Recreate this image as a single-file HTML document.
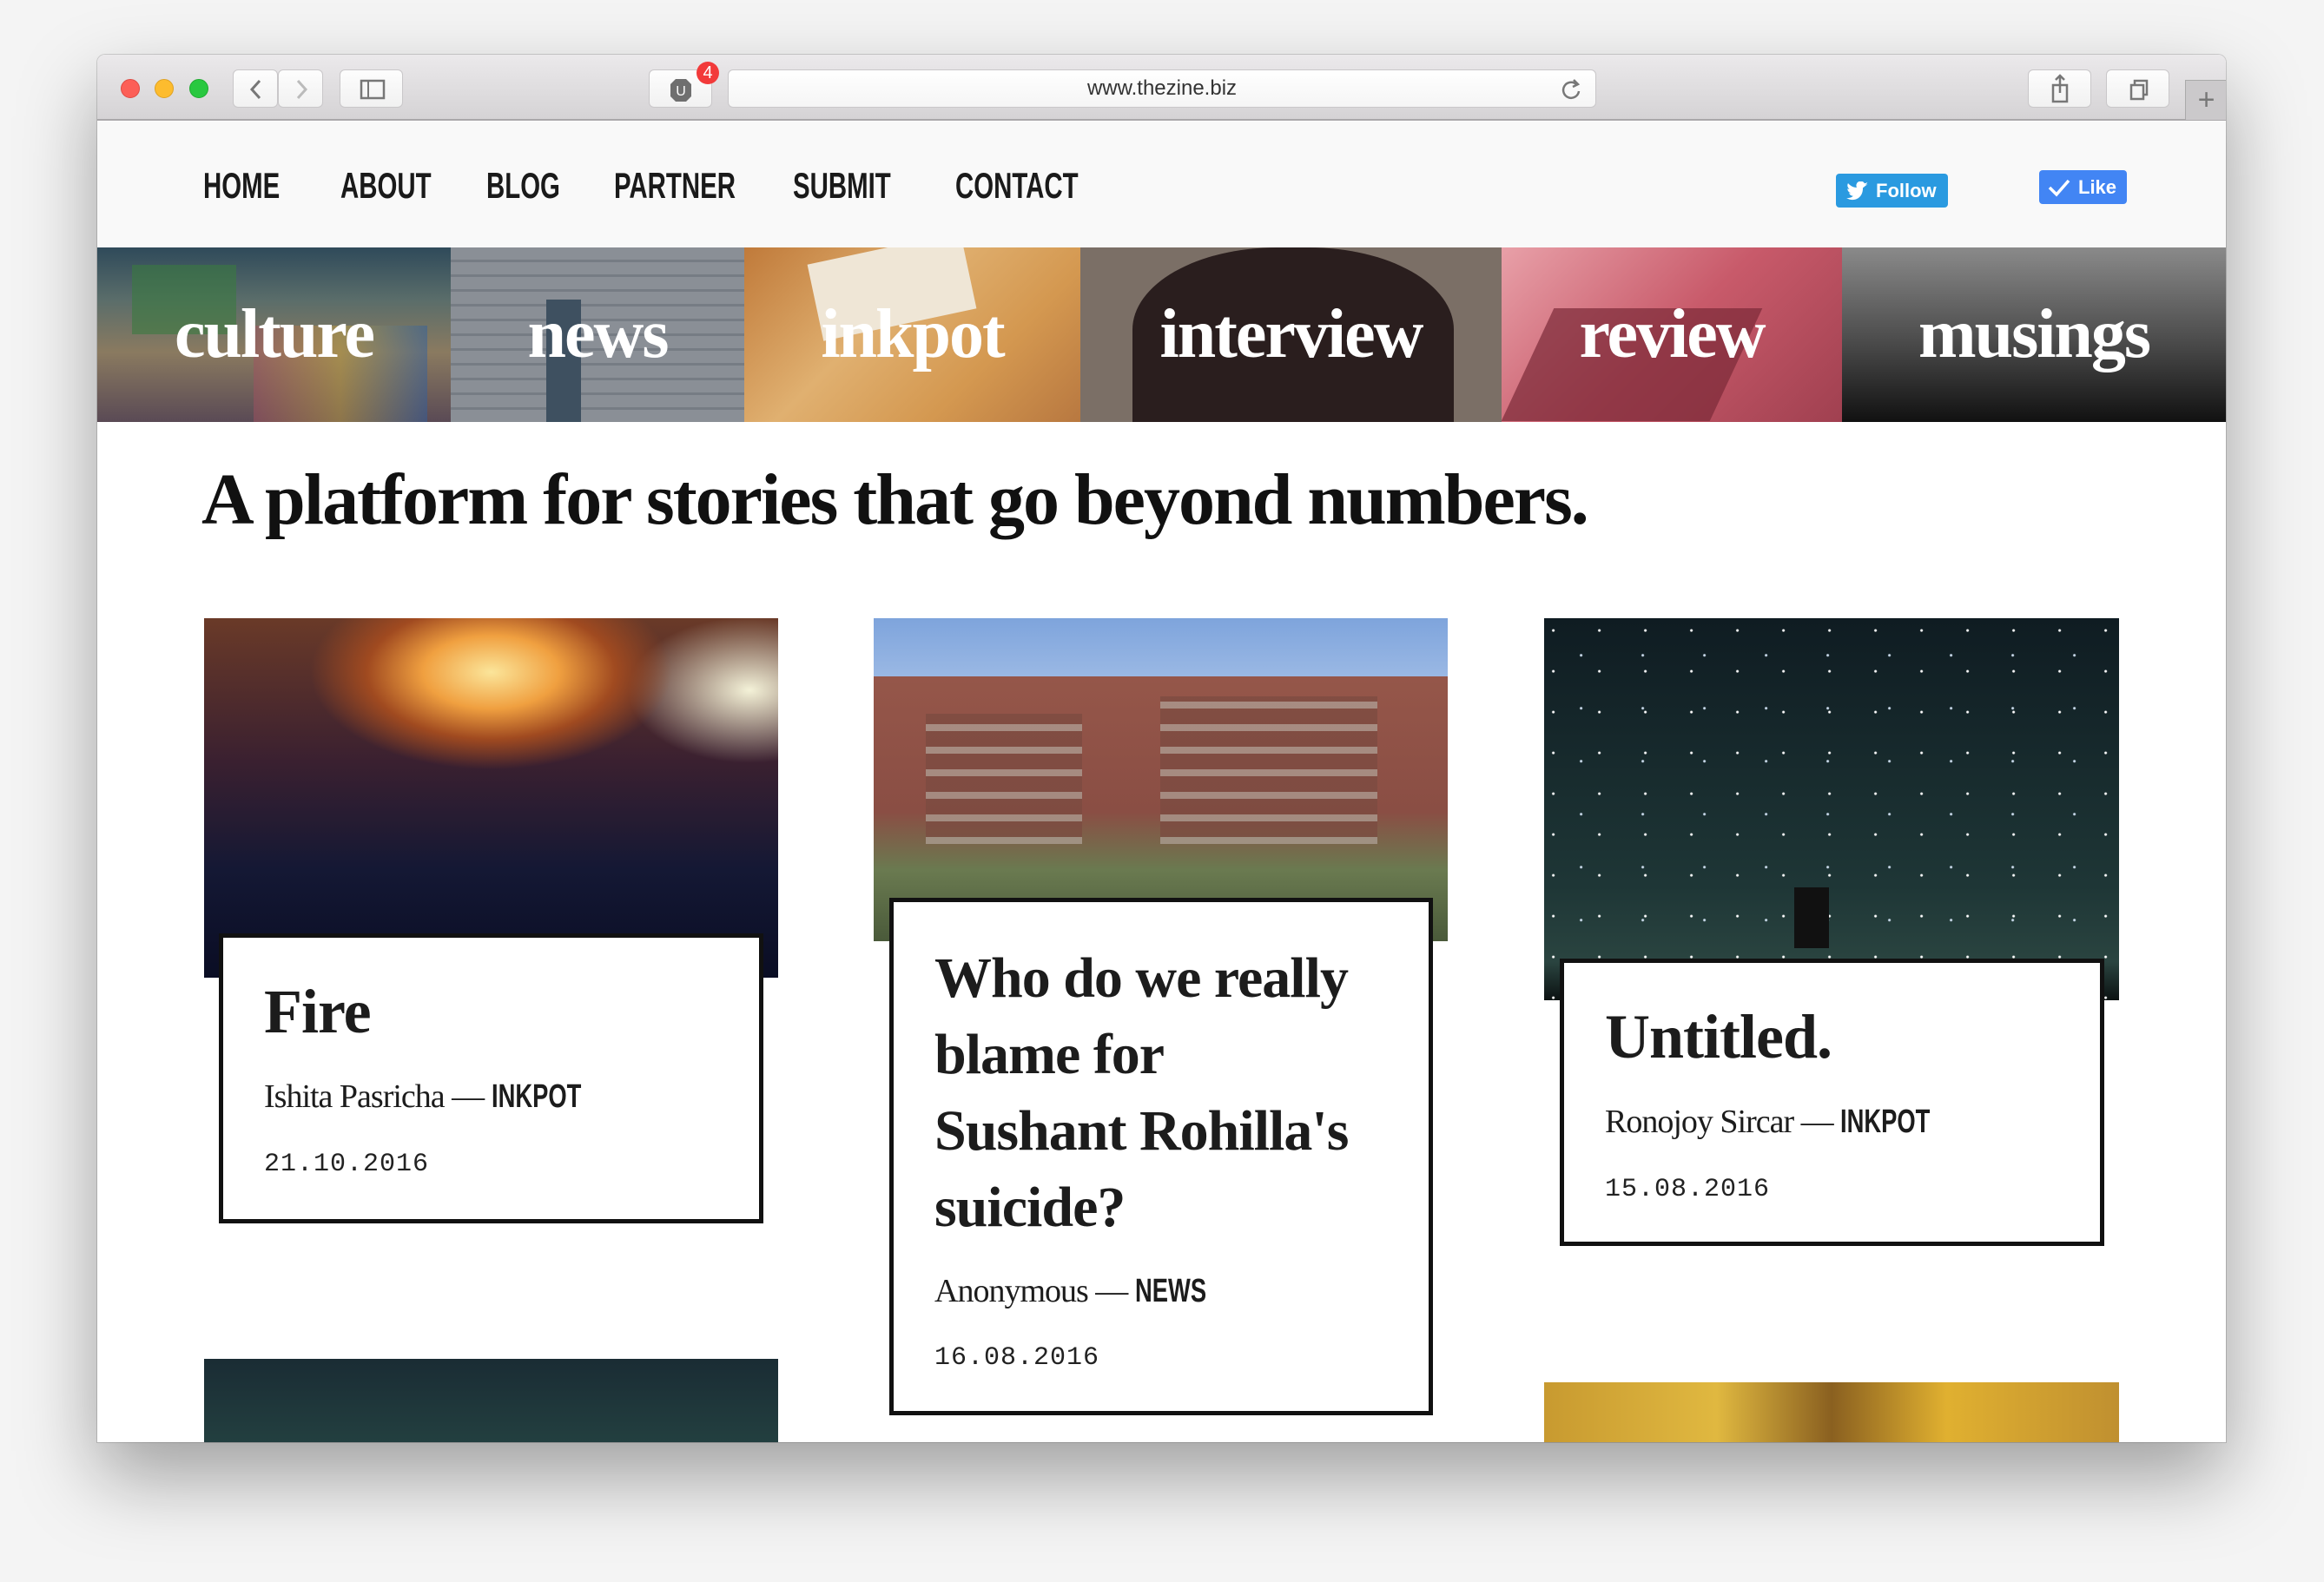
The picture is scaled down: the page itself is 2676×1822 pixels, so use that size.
<!DOCTYPE html>
<html><head><meta charset="utf-8"><style>
*{margin:0;padding:0;box-sizing:border-box}
body{width:2676px;height:1822px;background:#f4f4f4;position:relative;overflow:hidden;font-family:"Liberation Sans",sans-serif}
.win{position:absolute;left:112px;top:63px;width:2451px;height:1598px;background:#fff;border-radius:9px 9px 0 0;overflow:hidden;box-shadow:0 40px 90px rgba(0,0,0,.35),0 0 0 1px rgba(0,0,0,.15)}
.tb{position:absolute;left:0;top:0;width:100%;height:76px;background:linear-gradient(#ebe9eb,#d5d3d5);border-bottom:2px solid #a9a7a9}
.dot{position:absolute;top:28px;width:22px;height:22px;border-radius:50%}
.btn{position:absolute;top:17px;height:44px;background:linear-gradient(#fdfdfd,#f1f1f1);border:1px solid #c9c7c9;border-radius:6px}
.abs{position:absolute}
.nav{position:absolute;top:127px;font-family:"Liberation Sans",sans-serif;font-weight:bold;font-size:42px;color:#1a1a1a;transform:scaleX(.7);transform-origin:0 0;white-space:nowrap}
.cat{position:absolute;top:222px;height:201px;overflow:hidden}
.cat span{position:absolute;left:0;right:0;top:55px;text-align:center;font-family:"Liberation Serif",serif;font-weight:bold;font-size:80px;color:#fff;letter-spacing:-2px}
.serif{font-family:"Liberation Serif",serif}
.box{position:absolute;background:#fff;border:5px solid #111}
.t{font-family:"Liberation Serif",serif;font-weight:bold;color:#1c1c1c;letter-spacing:-1px;white-space:nowrap}
.by{font-family:"Liberation Serif",serif;font-size:38px;color:#1c1c1c;letter-spacing:-1px;white-space:nowrap}
.by b{display:inline-block;font-family:"Liberation Sans",sans-serif;font-size:38px;letter-spacing:0;transform:scaleX(.72);transform-origin:0 0}
.dt{font-family:"Liberation Mono",monospace;font-size:30px;color:#222;letter-spacing:1px}
</style></head><body>
<div class="win">
 <div class="tb">
  <div class="dot" style="left:27px;background:#fc5f57;border:1px solid #de4a43"></div>
  <div class="dot" style="left:66px;background:#fdbc2e;border:1px solid #dea123"></div>
  <div class="dot" style="left:106px;background:#29c840;border:1px solid #1eab2f"></div>
  <div class="btn" style="left:156px;width:52px"><svg width="52" height="44"><path d="M30 12 L21 22 L30 32" stroke="#777" stroke-width="3" fill="none"/></svg></div>
  <div class="btn" style="left:208px;width:52px"><svg width="52" height="44"><path d="M22 12 L31 22 L22 32" stroke="#bbb" stroke-width="3" fill="none"/></svg></div>
  <div class="btn" style="left:279px;width:73px"><svg width="73" height="44"><rect x="24" y="12" width="26" height="20" stroke="#777" stroke-width="2.5" fill="none"/><line x1="32" y1="12" x2="32" y2="32" stroke="#777" stroke-width="2"/></svg></div>
  <div class="btn" style="left:635px;width:73px"><svg width="73" height="44"><polygon points="30,10 42,10 48,16 48,30 42,36 30,36 24,30 24,16" fill="#6f6f6f"/><text x="36" y="29" fill="#fff" font-size="16" font-family="Liberation Sans" text-anchor="middle">U</text></svg></div>
  <div class="abs" style="left:690px;top:8px;width:26px;height:26px;border-radius:50%;background:#f23a3a;color:#fff;font-size:20px;text-align:center;line-height:26px">4</div>
  <div class="btn" style="left:726px;width:1000px;background:linear-gradient(#fff,#f5f5f5)"><div style="text-align:center;line-height:42px;font-size:24px;color:#333">www.thezine.biz</div><svg class="abs" style="right:14px;top:8px" width="26" height="28"><path d="M18 8 A9 9 0 1 0 21 16" stroke="#777" stroke-width="2.5" fill="none"/><path d="M15 3 L20 8 L14 11" stroke="#777" stroke-width="2.5" fill="none"/></svg></div>
  <div class="btn" style="left:2223px;width:73px"><svg width="73" height="44"><rect x="28" y="17" width="16" height="19" stroke="#777" stroke-width="2.5" fill="none"/><path d="M36 6 V26 M31 11 L36 6 L41 11" stroke="#777" stroke-width="2.5" fill="none"/></svg></div>
  <div class="btn" style="left:2313px;width:73px"><svg width="73" height="44"><rect x="28" y="17" width="14" height="16" stroke="#777" stroke-width="2.5" fill="none"/><path d="M32 17 V12 H46 V28 H42" stroke="#777" stroke-width="2.5" fill="none"/></svg></div>
  <div class="abs" style="left:2404px;top:29px;width:48px;height:46px;background:#cbc9cb;border-left:1px solid #aaa;border-top:1px solid #aaa;color:#777;font-size:34px;text-align:center;line-height:44px">+</div>
 </div>
 <div class="abs" style="left:0;top:77px;width:100%;height:145px;background:#f9f9f9"></div>
 <div class="nav" style="left:122px">HOME</div>
 <div class="nav" style="left:280px">ABOUT</div>
 <div class="nav" style="left:448px">BLOG</div>
 <div class="nav" style="left:595px">PARTNER</div>
 <div class="nav" style="left:801px">SUBMIT</div>
 <div class="nav" style="left:988px">CONTACT</div>
 <div class="abs" style="left:2002px;top:137px;width:129px;height:39px;background:#2a9ae0;border-radius:4px;color:#fff;font-weight:bold;font-size:22px;line-height:39px;padding-left:46px"><svg class="abs" style="left:12px;top:9px" width="26" height="22"><path d="M25 3c-1 .5-2 .7-3 .8 1-.7 2-1.7 2.3-2.8-1 .6-2 1-3.3 1.3A5 5 0 0 0 12 7C8 7 4.5 5 2 2c-1.4 2.4-.6 5.3 1.6 6.8-.8 0-1.6-.3-2.3-.6 0 2.5 1.8 4.6 4 5-.7.2-1.5.2-2.2.1.6 2 2.6 3.5 4.8 3.5A10 10 0 0 1 0 19c8 5 19 1 19-11v-.6C20.5 6.4 21.6 5 25 3z" fill="#fff"/></svg>Follow</div>
 <div class="abs" style="left:2236px;top:133px;width:101px;height:39px;background:#4285f4;border-radius:4px;color:#fff;font-weight:bold;font-size:22px;line-height:39px;padding-left:45px"><svg class="abs" style="left:9px;top:8px" width="28" height="24"><path d="M3 12 L11 20 L25 4" stroke="#fff" stroke-width="3.5" fill="none"/></svg>Like</div>

 <div class="cat" style="left:0;width:407px;background:linear-gradient(180deg,#2f4a5a 0%,#5a6d6a 30%,#8a7a60 60%,#5a4a55 100%)"><div class="abs" style="left:40px;top:20px;width:120px;height:80px;background:#3a7a40;opacity:.6"></div><div class="abs" style="left:180px;top:90px;width:200px;height:111px;background:linear-gradient(90deg,#a05060,#c0a040,#3060a0);opacity:.5"></div><span>culture</span></div>
 <div class="cat" style="left:407px;width:338px;background:repeating-linear-gradient(0deg,#8a8f96 0 14px,#767c84 14px 17px),#888"><div class="abs" style="left:110px;top:60px;width:40px;height:141px;background:#3e5060"></div><span>news</span></div>
 <div class="cat" style="left:745px;width:387px;background:linear-gradient(135deg,#c07a3a,#e0b070 40%,#d49850 70%,#b87840)"><div class="abs" style="left:80px;top:0;width:180px;height:90px;background:#efe6d6;transform:rotate(-12deg)"></div><span>inkpot</span></div>
 <div class="cat" style="left:1132px;width:485px;background:#7b6f66"><div class="abs" style="left:60px;top:0;width:370px;height:210px;border-radius:45% 45% 0 0;background:#2a1e1e"></div><span>interview</span></div>
 <div class="cat" style="left:1617px;width:392px;background:linear-gradient(135deg,#e8a0a8,#c85a6a 50%,#a04050)"><div class="abs" style="left:30px;top:70px;width:240px;height:130px;background:#7a2a38;transform:skewX(-25deg);opacity:.7"></div><span>review</span></div>
 <div class="cat" style="left:2009px;width:442px;background:linear-gradient(180deg,#8a8a8a,#4a4a4a 55%,#111)"><span>musings</span></div>

 <div class="abs serif" style="left:120px;top:464px;font-size:84px;font-weight:bold;color:#111;letter-spacing:-2px;white-space:nowrap">A platform for stories that go beyond numbers.</div>

 <div class="abs" style="left:123px;top:649px;width:661px;height:414px;background:radial-gradient(ellipse 260px 140px at 50% 15%,#fbe59a,#f0a040 30%,#a04a20 55%,transparent 80%),radial-gradient(ellipse 200px 120px at 95% 20%,#f4f2d8,transparent 70%),linear-gradient(180deg,#6a3a28 0%,#3a2030 40%,#141834 70%,#0a0d24 100%)"></div>
 <div class="box" style="left:140px;top:1012px;width:627px;height:334px">
  <div class="abs t" style="left:47px;top:44px;font-size:72px">Fire</div>
  <div class="abs by" style="left:47px;top:161px">Ishita Pasricha — <b>INKPOT</b></div>
  <div class="abs dt" style="left:47px;top:244px">21.10.2016</div>
 </div>
 <div class="abs" style="left:894px;top:649px;width:661px;height:372px;background:linear-gradient(180deg,#7ea4dc 0%,#9ab8e4 18%,transparent 18%),linear-gradient(180deg,#9a5a4c 0%,#8a4e44 60%,#6a7a50 78%,#4a5a3a 100%)"><div class="abs" style="left:60px;top:110px;width:180px;height:150px;background:repeating-linear-gradient(0deg,#b0a49a 0 8px,#7a4a40 8px 26px);opacity:.7"></div><div class="abs" style="left:330px;top:90px;width:250px;height:170px;background:repeating-linear-gradient(0deg,#b0a49a 0 8px,#7a4a40 8px 26px);opacity:.7"></div></div>
 <div class="box" style="left:912px;top:971px;width:626px;height:596px">
  <div class="abs t" style="left:47px;top:44px;font-size:66px;line-height:88px">Who do we really<br>blame for<br>Sushant Rohilla's<br>suicide?</div>
  <div class="abs by" style="left:47px;top:426px">Anonymous — <b>NEWS</b></div>
  <div class="abs dt" style="left:47px;top:508px">16.08.2016</div>
 </div>
 <div class="abs" style="left:1666px;top:649px;width:662px;height:440px;background:radial-gradient(circle at 20% 30%,#fff 0 1px,transparent 2px) 0 0/53px 47px,radial-gradient(circle at 60% 70%,#cde 0 1px,transparent 2px) 0 0/71px 61px,linear-gradient(180deg,#0f1c22,#1e3636 70%,#2a4440 90%,#0c1212 100%)"><div class="abs" style="left:288px;top:310px;width:40px;height:70px;background:#111"></div></div>
 <div class="box" style="left:1684px;top:1041px;width:627px;height:331px">
  <div class="abs t" style="left:47px;top:44px;font-size:72px">Untitled.</div>
  <div class="abs by" style="left:47px;top:161px">Ronojoy Sircar — <b>INKPOT</b></div>
  <div class="abs dt" style="left:47px;top:244px">15.08.2016</div>
 </div>
 <div class="abs" style="left:123px;top:1502px;width:661px;height:100px;background:linear-gradient(180deg,#1a2c34,#234040)"></div>
 <div class="abs" style="left:1666px;top:1529px;width:662px;height:80px;background:linear-gradient(90deg,#c89a30,#e0b840 30%,#8a6020 50%,#e0b030 70%,#c09030)"></div>
</div>
</body></html>
